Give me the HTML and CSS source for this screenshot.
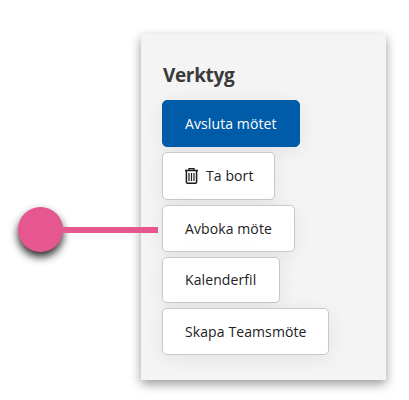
FILE: index.html
```html
<!DOCTYPE html>
<html lang="sv">
<head>
  <meta charset="UTF-8" />
  <meta name="viewport" content="width=device-width, initial-scale=1.0" />
  <title>Verktyg</title>
  <link rel="stylesheet" href="styles.css">
</head>
<body>
  <div class="panel">
    <h2>Verktyg</h2>
    <button class="btn btn-primary">Avsluta mötet</button>
    <button class="btn btn-delete">
      <svg class="icon" viewBox="0 0 13 16" width="13" height="16" fill="none" stroke="#1a1a1a">
        <path d="M0 2.5h13" stroke-width="1.5" />
        <path d="M4 2.2V0.7h5v1.5" stroke-width="1.3" />
        <path d="M1.4 3v11q0 1.3 1.3 1.3h7.6q1.3 0 1.3-1.3V3" stroke-width="1.5" />
        <path d="M4 5v8M6.5 5v8M9 5v8" stroke-width="1.2" />
      </svg>
      <span>Ta bort</span>
    </button>
    <button class="btn btn-cancel">Avboka möte</button>
    <button class="btn btn-calendar">Kalenderfil</button>
    <button class="btn btn-teams">Skapa Teamsmöte</button>
  </div>

  <div class="marker">
    <span class="marker-dot"></span>
    <span class="marker-line"></span>
  </div>
</body>
</html>
```

FILE: styles.css
```css
body {
  margin: 0;
  padding: 34px 23px 20px 141px;
  background-color: #ffffff;
  font-family: 'Open Sans', 'Noto Sans', sans-serif;
}
.panel {
  box-sizing: border-box;
  height: 346px;
  padding: 27px 21px 0;
  display: flex;
  flex-direction: column;
  align-items: flex-start;
  gap: 5px;
  background-color: #f4f4f4;
  box-shadow: 0 4px 10px rgba(0,0,0,0.4);
}
h2 {
  margin: 0 0 6px 1px;
  font-size: 19px;
  line-height: 28px;
  font-weight: 700;
  letter-spacing: -0.35px;
  color: #3a3a3a;
}
.btn {
  box-sizing: border-box;
  height: 47px;
  padding: 0 0 0 22px;
  display: flex;
  align-items: center;
  flex-shrink: 0;
  border: 1px solid #c8c8c8;
  border-radius: 5px;
  background-color: #ffffff;
  box-shadow: 0 4px 20px rgba(0,0,0,0.07);
  font-family: inherit;
  font-size: 14px;
  font-weight: 400;
  letter-spacing: 0.1px;
  color: #222222;
  white-space: nowrap;
  cursor: pointer;
}
.btn-primary {
  width: 138px;
  border-color: #005ca9;
  background-color: #005ca9;
  font-weight: 500;
  color: #ffffff;
}
.btn-delete {
  width: 113px;
  height: 48px;
  gap: 8px;
}
.btn-delete span {
  padding-bottom: 2px;
}
.btn-cancel {
  width: 133px;
}
.btn-calendar {
  width: 118px;
  height: 46px;
  padding-bottom: 1px;
}
.btn-teams {
  width: 167px;
}
.marker {
  position: absolute;
  left: 18px;
  top: 207px;
  display: flex;
  align-items: center;
}
.marker-dot {
  width: 45px;
  height: 45px;
  border-radius: 50%;
  background-color: #e7578f;
  box-shadow: 0 5px 8px rgba(0,0,0,0.85);
}
.marker-line {
  width: 97px;
  height: 6px;
  margin-left: -2px;
  background-color: #e7578f;
}
```
